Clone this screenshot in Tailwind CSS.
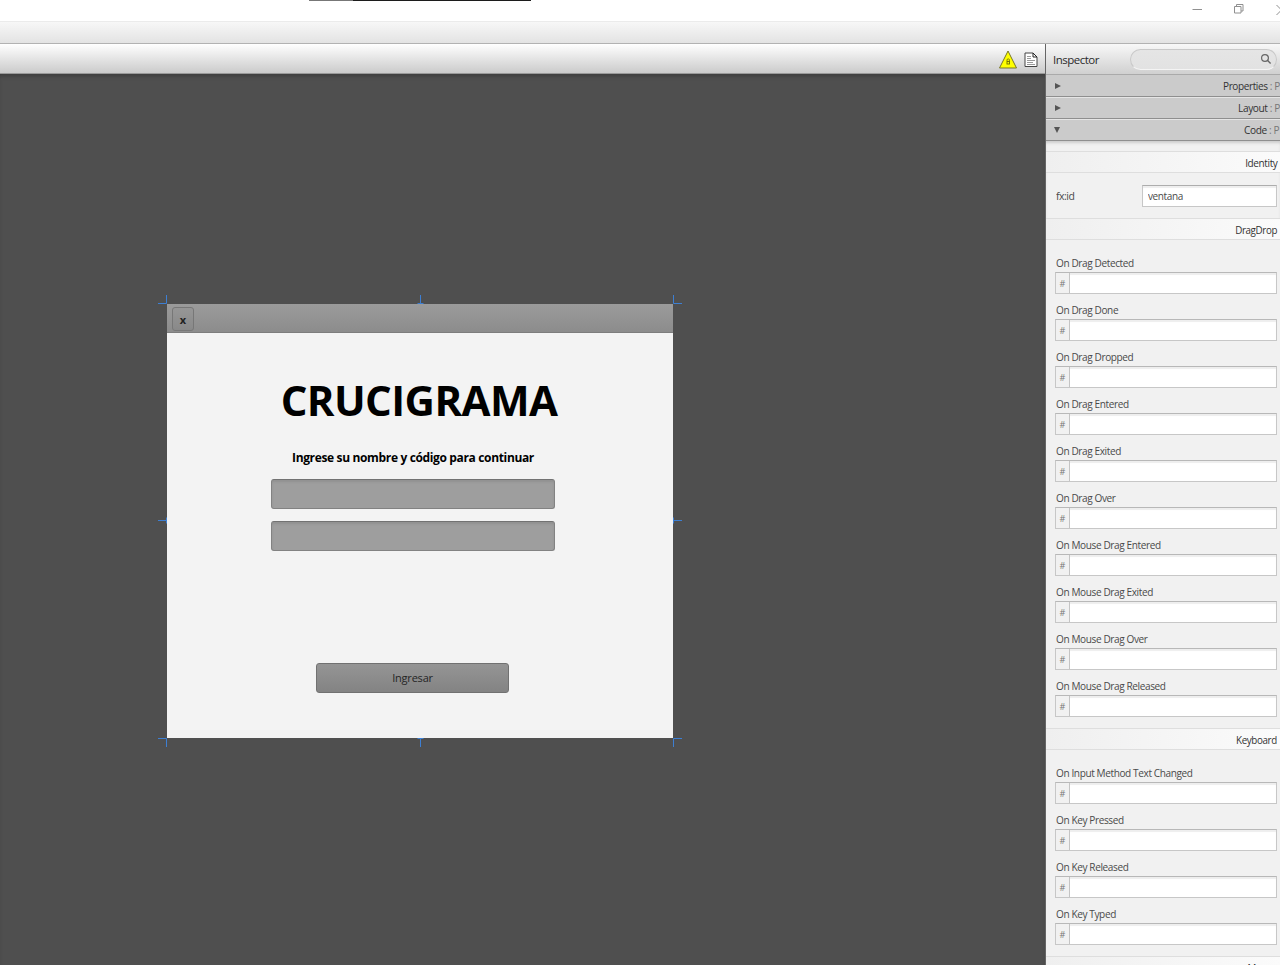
<!DOCTYPE html>
<html lang="es">
<head>
<meta charset="utf-8">
<title>Scene Builder</title>
<script src="https://cdn.jsdelivr.net/npm/@tailwindcss/browser@4"></script>
</head>
<body class="w-[1280px] h-[965px] overflow-hidden flex flex-col bg-white text-[#333] text-[11px] font-['Open_Sans','Noto_Sans',sans-serif]">
<header class="h-[21px] shrink-0 relative bg-white">
  <div class="absolute left-[309px] top-0 w-[222px] h-px flex"><div class="w-[44px] bg-[#777]"></div><div class="flex-1 bg-[#1c1c1c]"></div></div>
  <div class="flex justify-end h-full">
    <svg class="w-[90px] h-[21px]" viewBox="0 0 90 21" fill="none" stroke="#909090"><path d="M2.500 9.500h9.500"/><path d="M44.500 6.500h6.500v6.500h-6.500zM46.500 6.500v-2h6.500v6.500h-2"/><path d="M86.500 5l10 10M96.500 5l-10 10"/></svg>
  </div>
</header>
<div class="h-[23px] shrink-0 border-t border-t-[#ebebeb] border-b border-b-[#b2b2b2] bg-linear-to-b from-[#f7f7f7] to-[#e3e3e3]"></div>
<div class="flex flex-1 min-h-0">
  <main class="w-[1045px] flex flex-col">
    <div class="h-[30px] shrink-0 border-b border-[#999] bg-linear-to-b from-white to-[#cbcbcb] flex justify-end">
      <svg class="w-[50px] h-[30px]" viewBox="0 0 50 30" fill="none">
        <path d="M13 7L21.500 24H4.500Z" fill="#ff0" stroke="#77762a" stroke-linejoin="round"/>
        <rect x="12" y="17.500" width="2.500" height="2.500" stroke="#6b6b00" stroke-width=".9"/><path d="M12 17v-1.500q1.200-1.300 2.400 0v1.500" stroke="#6b6b00" stroke-width=".8"/>
        <path d="M30 9h8l4 4v9.500h-12z" fill="#fff" stroke="#444"/><path d="M38 9v4h4z" fill="#fff" stroke="#222"/>
        <path d="M32 12.500h4M32 14.500h4M32 16.500h8M32 18.500h6M32 20.500h8" stroke="#999"/>
      </svg>
    </div>
    <div class="flex-1 bg-[#4f4f4f] shadow-[inset_0_4px_4px_-2px_#3c3c3c] pt-[230px] pl-[167px]">
      <div class="relative w-[506px] h-[434px] bg-[#f3f3f3] flex flex-col items-center">
        <div class="self-stretch h-[29px] shrink-0 bg-linear-to-b from-[#9b9b9b] to-[#8c8c8c] border-b border-[#7d7d7d] pl-[5px] pt-[3px]">
          <button class="w-[22px] h-[24px] rounded-[3px] border border-[#777] bg-linear-to-b from-[#969696] to-[#898989] text-[#222] text-[11px] leading-[22px] pt-px font-bold flex justify-center">x</button>
        </div>
        <h1 class="mt-[39px] ml-[-2px] h-[56px] leading-[56px] text-[42px] font-bold text-black whitespace-nowrap tracking-[-0.600px]">CRUCIGRAMA</h1>
        <p class="mt-[20px] ml-[-14px] h-[20px] leading-[20px] text-[12px] font-bold text-black whitespace-nowrap tracking-[-0.350px]">Ingrese su nombre y código para continuar</p>
        <div class="mt-[11px] ml-[-14px] w-[284px] h-[30px] shrink-0 rounded-[3px] border border-[#828282] border-t-[#727272] bg-[#9e9e9e] shadow-[inset_0_2px_2px_#929292]"></div>
        <div class="mt-[12px] ml-[-14px] w-[284px] h-[30px] shrink-0 rounded-[3px] border border-[#828282] border-t-[#727272] bg-[#9e9e9e] shadow-[inset_0_2px_2px_#929292]"></div>
        <button class="mt-[112px] ml-[-15px] w-[193px] h-[30px] shrink-0 rounded-[3px] border border-[#717171] bg-linear-to-b from-[#959595] to-[#838383] text-[#252525] text-[11px] tracking-[-0.200px]">Ingresar</button>
        <svg class="absolute left-[-9px] top-[-9px] w-[524px] h-[452px]" viewBox="0 0 524 452" fill="none" stroke="#3d7fd3">
          <path d="M0 8.500h8.500V0M262.500 0v8M259.500 8.500h6M515.500 0v8.500h8.500M0 225.500h9M8.500 222.500v6M515 225.500h9M515.500 222.500v6M0 443.500h8.500v8.500M262.500 452v-8.500M259.500 443.500h6M524 443.500h-8.500v8.500"/>
        </svg>
      </div>
    </div>
  </main>
  <aside class="w-[235px] border-l border-[#666] bg-[#f1f1f1] flex flex-col overflow-hidden">
    <div class="h-[30px] shrink-0 bg-linear-to-b from-[#f8f8f8] to-[#d0d0d0] flex items-center pl-[7px]">
      <span class="w-[77px] pt-[2px] text-[11.500px] tracking-[-0.500px] text-[#2b2b2b]">Inspector</span>
      <div class="w-[147px] h-[21px] rounded-full border border-[#c9c9c9] border-b-[#f4f4f4] bg-linear-to-b from-[#e5e5e5] to-[#e2e2e2] flex justify-end items-center pr-[4px]">
        <svg class="w-[12px] h-[12px]" viewBox="0 0 12 12" fill="none" stroke="#666"><circle cx="5" cy="5" r="3.400" stroke-width="1.200"/><path d="M7.600 7.600l3 3" stroke-width="1.400"/></svg>
      </div>
    </div>
    <div class="h-[23px] shrink-0 border-t border-t-[#aaa] border-b border-b-[#8f8f8f] bg-[#cbcbcb] flex items-center pl-[9px] whitespace-nowrap"><svg class="w-[6px] h-[6px] shrink-0" viewBox="0 0 6 6"><path d="M0 0l6 3-6 3z" fill="#555"/></svg><span class="ml-[162px] pt-px origin-left scale-x-[0.91] tracking-[-0.420px]">Properties <span class="text-[#777]">: P</span></span></div>
    <div class="h-[22px] shrink-0 border-t border-t-[#e5e5e5] border-b border-b-[#8f8f8f] bg-[#cbcbcb] flex items-center pl-[9px] whitespace-nowrap"><svg class="w-[6px] h-[6px] shrink-0" viewBox="0 0 6 6"><path d="M0 0l6 3-6 3z" fill="#555"/></svg><span class="ml-[177px] origin-left scale-x-[0.92] tracking-[-0.420px]">Layout <span class="text-[#777]">: P</span></span></div>
    <div class="h-[22px] shrink-0 border-t border-t-[#e5e5e5] border-b border-b-[#8f8f8f] bg-[#cbcbcb] flex items-center pl-[8px] whitespace-nowrap"><svg class="w-[6px] h-[6px] shrink-0" viewBox="0 0 6 6"><path d="M0 0h6l-3 6z" fill="#555"/></svg><span class="ml-[184px] origin-left scale-x-[0.92] tracking-[-0.420px]">Code <span class="text-[#777]">: P</span></span></div>
    <div class="pt-[10px] shadow-[inset_0_3px_3px_-1px_#ccc]">
      <h2 class="h-[22px] border-y border-[#dedede] bg-linear-to-r from-[#efefef] to-[#fbfbfb] leading-[21px] text-right pr-[3px] tracking-[-0.420px]"><span class="inline-block origin-right scale-x-[0.91]">Identity</span></h2>
      <div class="h-[45px] flex items-center pl-[10px]">
        <span class="w-[86px] pt-px origin-left scale-x-[0.95] tracking-[-0.500px] text-[#4a4a4a]">fx:id</span>
        <div class="w-[135px] h-[22px] border border-[#c7c7c7] border-t-[#adadad] bg-white shadow-[inset_0_2px_1px_#eee] leading-[20px] pl-[5px] tracking-[-0.420px] text-[#4a4a4a]"><span class="inline-block origin-left scale-x-[0.91]">ventana</span></div>
      </div>
    </div>
    <div id="sections" class="shrink-0"></div>
  </aside>
</div>
<script>
const groups = [
  ['DragDrop', ['On Drag Detected','On Drag Done','On Drag Dropped','On Drag Entered','On Drag Exited','On Drag Over','On Mouse Drag Entered','On Mouse Drag Exited','On Mouse Drag Over','On Mouse Drag Released']],
  ['Keyboard', ['On Input Method Text Changed','On Key Pressed','On Key Released','On Key Typed']],
  ['Mouse', []]
];
const field = t => `<div class="h-[47px] pl-[9px]"><div class="pl-px h-[19px] leading-[19px] tracking-[-0.420px] text-[#4a4a4a] whitespace-nowrap"><span class="inline-block origin-left scale-x-[0.913]">${t}</span></div><div class="w-[222px] h-[22px] flex border border-[#c7c7c7] border-t-[#b8b8b8] bg-white shadow-[inset_0_2px_1px_#eee]"><div class="w-[14px] border-r border-[#c4c4c4] bg-[#f1f1f1] text-center text-[9px] leading-[21px] text-[#777]">#</div></div></div>`;
document.getElementById('sections').innerHTML = groups.map(([n, f]) => `<section><h2 class="h-[22px] border-y border-[#dedede] bg-linear-to-r from-[#efefef] to-[#fbfbfb] leading-[21px] text-right pr-[3px] tracking-[-0.420px]"><span class="inline-block origin-right scale-x-[0.89]">${n}</span></h2><div class="pt-[13px] pb-[5px]">${f.map(field).join('')}</div></section>`).join('');
</script>
</body>
</html>
